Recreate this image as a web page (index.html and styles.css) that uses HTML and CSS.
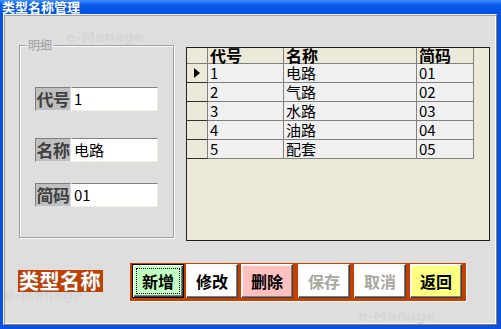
FILE: index.html
```html
<!DOCTYPE html>
<html>
<head>
<meta charset="utf-8">
<link rel="stylesheet" href="styles.css">
</head>
<body>
<div class="win">
  <div class="title">类型名称管理</div>
  <div class="frame">
    <div class="client">
      <span class="wm wm1">e-Manage</span>
      <span class="wm wm2">e-Manage</span>
      <span class="wm wm3">e-Manage</span>
      <div class="main">
        <div class="group">
          <span class="legend">明细</span>
          <div class="field f1"><span class="lbl">代号</span><span class="inp">1</span></div>
          <div class="field f2"><span class="lbl">名称</span><span class="inp">电路</span></div>
          <div class="field f3"><span class="lbl">简码</span><span class="inp">01</span></div>
        </div>
        <div class="grid">
          <div class="row head">
            <div class="c ind"></div><div class="c c1">代号</div><div class="c c2">名称</div><div class="c c3">简码</div>
          </div>
          <div class="row">
            <div class="c ind"><span class="arrow"></span></div><div class="c c1">1</div><div class="c c2">电路</div><div class="c c3">01</div>
          </div>
          <div class="row">
            <div class="c ind"></div><div class="c c1">2</div><div class="c c2">气路</div><div class="c c3">02</div>
          </div>
          <div class="row">
            <div class="c ind"></div><div class="c c1">3</div><div class="c c2">水路</div><div class="c c3">03</div>
          </div>
          <div class="row">
            <div class="c ind"></div><div class="c c1">4</div><div class="c c2">油路</div><div class="c c3">04</div>
          </div>
          <div class="row">
            <div class="c ind"></div><div class="c c1">5</div><div class="c c2">配套</div><div class="c c3">05</div>
          </div>
        </div>
      </div>
      <div class="bottom">
        <div class="tag">类型名称</div>
        <div class="bar">
          <div class="cell"><button class="btn add">新增</button></div>
          <div class="cell"><button class="btn edit">修改</button></div>
          <div class="cell"><button class="btn del">删除</button></div>
          <div class="cell"><button class="btn off">保存</button></div>
          <div class="cell"><button class="btn off">取消</button></div>
          <div class="cell"><button class="btn back">返回</button></div>
        </div>
      </div>
    </div>
  </div>
</div>
</body>
</html>
```
FILE: styles.css
```css
* { box-sizing: border-box; margin: 0; padding: 0; }
html, body { width: 501px; height: 329px; overflow: hidden; }
body { font-family: "Noto Sans CJK SC", "Noto Sans", sans-serif; background: #dedede; }

.win { width: 501px; height: 329px; display: flex; flex-direction: column; background: #0a50e2; }
.title {
  height: 14px; flex: none;
  background: linear-gradient(#3c8cff 0, #0a5ae8 35%, #0052e4 100%);
  color: #fff; font-weight: bold; font-size: 13px; line-height: 14px;
  padding-left: 2px; white-space: nowrap;
}
.frame { flex: 1; padding: 0 4px 4px 3px; background: #0a50e2; display: flex; }
.client {
  flex: 1; position: relative; background: #dedede;
  border: 1px solid; border-color: #f4f4f4 #808080 #808080 #f4f4f4;
  box-shadow: inset 1px 1px #a0a0a0, inset -1px -1px #fff;
  overflow: hidden;
}

.wm { position: absolute; font-family: "DejaVu Sans", sans-serif; font-weight: bold; font-size: 14px; line-height: 16px; color: #d6d6d6; z-index: 0; }
.wm1 { left: 62px; top: 14px; }
.wm2 { left: 1px; top: 272px; }
.wm3 { left: 354px; top: 293px; }

.main { display: flex; align-items: flex-start; position: relative; z-index: 1; }
.group {
  position: relative; width: 155px; height: 193px;
  margin: 30px 0 0 15px;
  border: 1px solid #a0a0a0;
  box-shadow: inset 1px 1px #fff, 1px 1px #fff;
  padding: 41px 0 0 15px;
}
.legend {
  position: absolute; left: 6px; top: -8px; padding: 0 2px;
  background: #dedede; color: #a0a0a0; font-size: 12px; line-height: 14px;
}
.field { display: flex; height: 24px; }
.f2 { margin-top: 27px; }
.f3 { margin-top: 21px; }
.lbl {
  width: 36px; height: 24px; background: #c0c0c0; color: #404040;
  font-weight: bold; font-size: 17px; line-height: 21px; text-align: center;
  border: 1px solid; border-color: #808080 #e0e0e0 #e0e0e0 #808080;
  letter-spacing: -0.5px; white-space: nowrap;
}
.inp {
  width: 87px; height: 24px; background: #fff; color: #000;
  font-size: 15px; line-height: 21px; padding-left: 2px;
  border: 1px solid; border-color: #808080 #f0f0e0 #f0f0e0 #fff;
}

.grid {
  width: 304px; height: 194px; margin: 32px 0 0 12px;
  background: #ece9d8; border: 1px solid #202020;
}
.row { display: flex; height: 19px; }
.row.head { height: 16px; }
.c {
  height: 100%; border-right: 1px solid #808080; border-bottom: 1px solid #808080;
  font-size: 15px; line-height: 18px; padding-left: 2px; background: #f0f0f0; color: #000;
  white-space: nowrap;
}
.ind { width: 21px; background: #ece9d8; border-bottom-color: #303030; border-right-color: #808080; position: relative; }
.c1 { width: 76px; }
.c2 { width: 133px; }
.c3 { width: 57px; }
.head .c { background: #ece9d8; font-weight: bold; font-size: 16px; line-height: 15px; }
.head .ind { border-bottom-color: #808080; }
.arrow {
  position: absolute; left: 7px; top: 4px; width: 0; height: 0;
  border-top: 5px solid transparent; border-bottom: 5px solid transparent; border-left: 6px solid #000;
}

.bottom { display: flex; align-items: flex-start; position: relative; z-index: 1; }
.tag {
  width: 85px; height: 22px; margin: 29px 0 0 14px;
  background: #c44000; color: #fff; font-weight: bold; font-size: 20px; line-height: 22px;
  letter-spacing: 0.5px; padding-left: 1px; white-space: nowrap;
  text-shadow: 1px 1px 0 rgba(120,120,120,0.5);
}
.bar {
  display: grid; grid-template-columns: 54px 55px 57px 56px 56px 52px;
  width: 336px; height: 38px; margin: 22px 0 0 27px;
  padding: 1px 0 0 2px; background: #c44000;
  box-shadow: 1px 1px 0 #fff;
}
.cell { height: 34px; }
.btn {
  width: 52px; height: 34px; font-family: inherit; font-weight: bold; font-size: 16px; line-height: 20px;
  color: #000; background: #fff; cursor: default;
  border: 1px solid; border-color: #fff #404040 #404040 #fff;
  box-shadow: inset -1px -1px #808080, inset 1px 1px #f4f4f4;
}
.add {
  background: #c0ffc0; border-color: #000;
  box-shadow: inset 1px 1px #fff, inset -1px -1px #404040, inset -2px -2px #808080;
  outline: 1px dotted #000; outline-offset: -5px;
}
.edit { background: #ffffff; }
.del { background: #ffc0c0; }
.off { background: #ffffff; color: #a8a8a0; }
.back { background: #ffff80; }
```
